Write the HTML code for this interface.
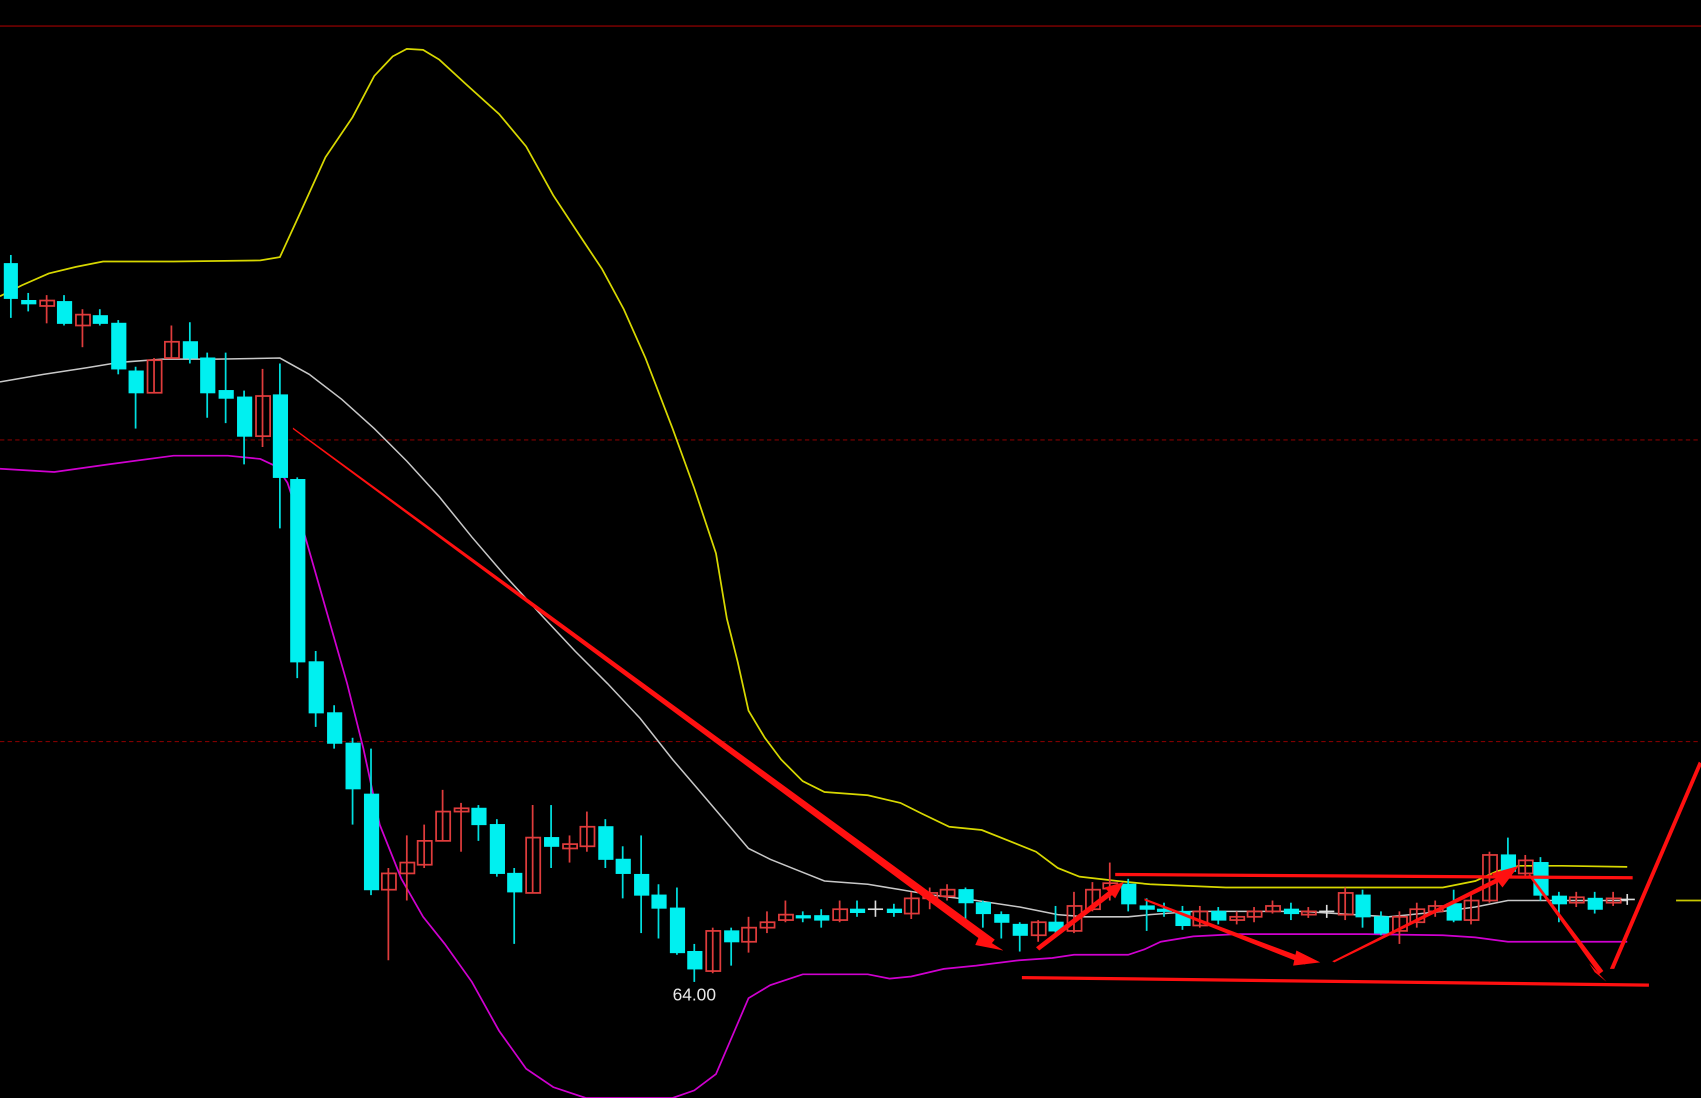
<!DOCTYPE html>
<html><head><meta charset="utf-8"><style>
html,body{margin:0;padding:0;background:#000;overflow:hidden}
svg{display:block}
.u{fill:none;stroke:#e03c3c;stroke-width:1.6}
.d{fill:#00f0f0;stroke:#00f0f0;stroke-width:1}
.wu{stroke:#e03c3c;stroke-width:1.6}
.wd{stroke:#00e0e0;stroke-width:1.6}
</style></head><body>
<svg width="1701" height="1098" viewBox="0 0 1568 1012" preserveAspectRatio="none" xmlns="http://www.w3.org/2000/svg">
<rect width="1568" height="1012" fill="#000"/>
<line x1="0" y1="24" x2="1568" y2="24" stroke="#700000" stroke-width="1.5"/>
<line x1="0" y1="405.5" x2="1568" y2="405.5" stroke="#800000" stroke-width="1" stroke-dasharray="4,3"/>
<line x1="0" y1="683.5" x2="1568" y2="683.5" stroke="#800000" stroke-width="1" stroke-dasharray="4,3"/>

<polyline fill="none" stroke="#d8d800" stroke-width="1.6" points="0,273 20,263 45,252 70,246 95,241 160,241 240,240 258,237 275,200 300,145 325,108 345,70 362,52 375,45 390,46 405,55 430,78 460,105 485,135 510,180 535,218 555,248 575,285 595,330 620,395 640,450 660,510 670,570 680,610 690,655 705,680 720,700 740,720 760,730 800,733 830,740 850,750 875,762 905,765 930,775 955,785 975,800 995,808 1030,812 1060,815 1130,818 1230,818 1330,818 1360,812 1380,803 1400,798 1440,798 1500,799"/>
<polyline fill="none" stroke="#c8c8c8" stroke-width="1.4" points="0,352 40,345 80,339 110,334 150,331 200,331 258,330 285,345 315,368 345,395 375,425 405,458 435,495 465,530 500,568 530,600 560,630 590,662 620,700 650,735 690,782 710,792 735,802 760,812 800,815 830,820 860,825 900,830 940,836 975,843 1000,845 1040,845 1060,843 1100,840 1200,840 1280,845 1330,840 1360,836 1390,830 1420,830 1500,830"/>
<polyline fill="none" stroke="#d000d0" stroke-width="1.6" points="0,432 50,435 100,428 160,420 210,420 240,423 255,430 265,445 280,490 300,560 320,630 335,690 350,760 370,810 390,845 410,870 435,905 460,950 485,985 510,1002 540,1012 620,1012 640,1005 660,990 675,955 690,920 710,908 740,898 800,898 820,902 840,900 870,893 900,890 940,885 970,883 990,880 1040,880 1055,875 1070,868 1100,863 1140,861 1200,861 1260,861 1330,862 1360,864 1390,868 1440,868 1500,868"/>

<g>
<line class="wd" x1="10" y1="235" x2="10" y2="293"/><rect class="d" x="4" y="243" width="12" height="32"/>
<line class="wd" x1="26" y1="270" x2="26" y2="287"/><rect class="d" x="20" y="277" width="13" height="3"/>
<line class="wu" x1="43" y1="272" x2="43" y2="298"/><rect class="u" x="37" y="277" width="13" height="5"/>
<line class="wd" x1="59" y1="272" x2="59" y2="300"/><rect class="d" x="53" y="278" width="13" height="20"/>
<line class="wu" x1="76" y1="285" x2="76" y2="320"/><rect class="u" x="70" y="290" width="13" height="10"/>
<line class="wd" x1="92" y1="285" x2="92" y2="300"/><rect class="d" x="86" y="291" width="13" height="7"/>
<line class="wd" x1="109" y1="295" x2="109" y2="345"/><rect class="d" x="103" y="298" width="13" height="42"/>
<line class="wd" x1="125" y1="338" x2="125" y2="395"/><rect class="d" x="119" y="342" width="13" height="20"/>
<line class="wu" x1="142" y1="330" x2="142" y2="362"/><rect class="u" x="136" y="332" width="13" height="30"/>
<line class="wu" x1="158" y1="300" x2="158" y2="330"/><rect class="u" x="152" y="315" width="13" height="15"/>
<line class="wd" x1="175" y1="297" x2="175" y2="335"/><rect class="d" x="169" y="315" width="13" height="15"/>
<line class="wd" x1="191" y1="325" x2="191" y2="385"/><rect class="d" x="185" y="330" width="13" height="32"/>
<line class="wd" x1="208" y1="325" x2="208" y2="390"/><rect class="d" x="202" y="360" width="13" height="7"/>
<line class="wd" x1="225" y1="360" x2="225" y2="428"/><rect class="d" x="219" y="366" width="13" height="36"/>
<line class="wu" x1="242" y1="340" x2="242" y2="412"/><rect class="u" x="236" y="365" width="13" height="37"/>
<line class="wd" x1="258" y1="335" x2="258" y2="487"/><rect class="d" x="252" y="364" width="13" height="76"/>
<line class="wd" x1="274" y1="440" x2="274" y2="625"/><rect class="d" x="268" y="442" width="13" height="168"/>
<line class="wd" x1="291" y1="600" x2="291" y2="670"/><rect class="d" x="285" y="610" width="13" height="47"/>
<line class="wd" x1="308" y1="650" x2="308" y2="690"/><rect class="d" x="302" y="657" width="13" height="28"/>
<line class="wd" x1="325" y1="680" x2="325" y2="760"/><rect class="d" x="319" y="685" width="13" height="42"/>
<line class="wd" x1="342" y1="690" x2="342" y2="825"/><rect class="d" x="336" y="732" width="13" height="88"/>
<line class="wu" x1="358" y1="800" x2="358" y2="885"/><rect class="u" x="352" y="805" width="13" height="15"/>
<line class="wu" x1="375" y1="770" x2="375" y2="830"/><rect class="u" x="369" y="795" width="13" height="10"/>
<line class="wu" x1="391" y1="760" x2="391" y2="800"/><rect class="u" x="385" y="775" width="13" height="22"/>
<line class="wu" x1="408" y1="728" x2="408" y2="775"/><rect class="u" x="402" y="748" width="13" height="27"/>
<line class="wu" x1="425" y1="740" x2="425" y2="785"/><rect class="u" x="419" y="745" width="13" height="3"/>
<line class="wd" x1="441" y1="742" x2="441" y2="775"/><rect class="d" x="435" y="745" width="13" height="15"/>
<line class="wd" x1="458" y1="755" x2="458" y2="808"/><rect class="d" x="452" y="760" width="13" height="45"/>
<line class="wd" x1="474" y1="800" x2="474" y2="870"/><rect class="d" x="468" y="805" width="13" height="17"/>
<line class="wu" x1="491" y1="742" x2="491" y2="823"/><rect class="u" x="485" y="772" width="13" height="51"/>
<line class="wd" x1="508" y1="742" x2="508" y2="800"/><rect class="d" x="502" y="772" width="13" height="8"/>
<line class="wu" x1="525" y1="770" x2="525" y2="795"/><rect class="u" x="519" y="778" width="13" height="4"/>
<line class="wu" x1="541" y1="748" x2="541" y2="785"/><rect class="u" x="535" y="762" width="13" height="18"/>
<line class="wd" x1="558" y1="755" x2="558" y2="800"/><rect class="d" x="552" y="762" width="13" height="30"/>
<line class="wd" x1="574" y1="780" x2="574" y2="828"/><rect class="d" x="568" y="792" width="13" height="13"/>
<line class="wd" x1="591" y1="770" x2="591" y2="860"/><rect class="d" x="585" y="806" width="13" height="19"/>
<line class="wd" x1="607" y1="815" x2="607" y2="865"/><rect class="d" x="601" y="825" width="13" height="12"/>
<line class="wd" x1="624" y1="818" x2="624" y2="880"/><rect class="d" x="618" y="837" width="13" height="41"/>
<line class="wd" x1="640" y1="870" x2="640" y2="905"/><rect class="d" x="634" y="877" width="13" height="16"/>
<line class="wu" x1="657" y1="855" x2="657" y2="897"/><rect class="u" x="651" y="858" width="13" height="37"/>
<line class="wd" x1="674" y1="855" x2="674" y2="890"/><rect class="d" x="668" y="858" width="13" height="10"/>
<line class="wu" x1="690" y1="845" x2="690" y2="878"/><rect class="u" x="684" y="855" width="13" height="13"/>
<line class="wu" x1="707" y1="840" x2="707" y2="860"/><rect class="u" x="701" y="850" width="13" height="5"/>
<line class="wu" x1="724" y1="830" x2="724" y2="850"/><rect class="u" x="718" y="843" width="13" height="5"/>
<line class="wd" x1="740" y1="840" x2="740" y2="850"/><rect class="d" x="734" y="844" width="13" height="2"/>
<line class="wd" x1="757" y1="838" x2="757" y2="855"/><rect class="d" x="751" y="844" width="13" height="4"/>
<line class="wu" x1="774" y1="830" x2="774" y2="850"/><rect class="u" x="768" y="838" width="13" height="10"/>
<line class="wd" x1="790" y1="830" x2="790" y2="845"/><rect class="d" x="784" y="838" width="13" height="3"/>
<line stroke="#ddd" stroke-width="1.5" x1="807" y1="830" x2="807" y2="845"/><line stroke="#ddd" stroke-width="1.5" x1="800" y1="838" x2="814" y2="838"/>
<line class="wd" x1="824" y1="833" x2="824" y2="845"/><rect class="d" x="818" y="838" width="13" height="3"/>
<line class="wu" x1="840" y1="822" x2="840" y2="847"/><rect class="u" x="834" y="828" width="13" height="14"/>
<line class="wu" x1="857" y1="818" x2="857" y2="838"/><rect class="u" x="851" y="823" width="13" height="5"/>
<line class="wu" x1="873" y1="815" x2="873" y2="830"/><rect class="u" x="867" y="820" width="13" height="6"/>
<line class="wd" x1="890" y1="818" x2="890" y2="850"/><rect class="d" x="884" y="820" width="13" height="12"/>
<line class="wd" x1="906" y1="830" x2="906" y2="855"/><rect class="d" x="900" y="832" width="13" height="10"/>
<line class="wd" x1="923" y1="840" x2="923" y2="865"/><rect class="d" x="917" y="843" width="13" height="7"/>
<line class="wd" x1="940" y1="850" x2="940" y2="877"/><rect class="d" x="934" y="852" width="13" height="10"/>
<line class="wu" x1="957" y1="848" x2="957" y2="868"/><rect class="u" x="951" y="850" width="13" height="12"/>
<line class="wd" x1="973" y1="835" x2="973" y2="862"/><rect class="d" x="967" y="850" width="13" height="8"/>
<line class="wu" x1="990" y1="822" x2="990" y2="860"/><rect class="u" x="984" y="835" width="13" height="23"/>
<line class="wu" x1="1007" y1="813" x2="1007" y2="840"/><rect class="u" x="1001" y="820" width="13" height="18"/>
<line class="wu" x1="1023" y1="795" x2="1023" y2="830"/><rect class="u" x="1017" y="814" width="13" height="5"/>
<line class="wd" x1="1040" y1="810" x2="1040" y2="840"/><rect class="d" x="1034" y="815" width="13" height="18"/>
<line class="wd" x1="1057" y1="828" x2="1057" y2="858"/><rect class="d" x="1051" y="835" width="13" height="3"/>
<line class="wd" x1="1073" y1="832" x2="1073" y2="845"/><rect class="d" x="1067" y="838" width="13" height="2"/>
<line class="wd" x1="1090" y1="835" x2="1090" y2="857"/><rect class="d" x="1084" y="840" width="13" height="13"/>
<line class="wu" x1="1106" y1="835" x2="1106" y2="855"/><rect class="u" x="1100" y="840" width="13" height="13"/>
<line class="wd" x1="1123" y1="836" x2="1123" y2="852"/><rect class="d" x="1117" y="840" width="13" height="8"/>
<line class="wu" x1="1140" y1="840" x2="1140" y2="852"/><rect class="u" x="1134" y="845" width="13" height="3"/>
<line class="wu" x1="1156" y1="836" x2="1156" y2="850"/><rect class="u" x="1150" y="840" width="13" height="5"/>
<line class="wu" x1="1173" y1="830" x2="1173" y2="842"/><rect class="u" x="1167" y="835" width="13" height="5"/>
<line class="wd" x1="1190" y1="832" x2="1190" y2="848"/><rect class="d" x="1184" y="838" width="13" height="4"/>
<line class="wu" x1="1206" y1="836" x2="1206" y2="846"/><rect class="u" x="1200" y="840" width="13" height="3"/>
<line stroke="#ddd" stroke-width="1.5" x1="1223" y1="834" x2="1223" y2="846"/><line stroke="#ddd" stroke-width="1.5" x1="1216" y1="840" x2="1230" y2="840"/>
<line class="wu" x1="1240" y1="818" x2="1240" y2="848"/><rect class="u" x="1234" y="823" width="13" height="20"/>
<line class="wd" x1="1256" y1="820" x2="1256" y2="855"/><rect class="d" x="1250" y="825" width="13" height="20"/>
<line class="wd" x1="1273" y1="840" x2="1273" y2="862"/><rect class="d" x="1267" y="845" width="13" height="15"/>
<line class="wu" x1="1290" y1="840" x2="1290" y2="870"/><rect class="u" x="1284" y="845" width="13" height="13"/>
<line class="wu" x1="1306" y1="832" x2="1306" y2="855"/><rect class="u" x="1300" y="838" width="13" height="12"/>
<line class="wu" x1="1323" y1="830" x2="1323" y2="845"/><rect class="u" x="1317" y="835" width="13" height="5"/>
<line class="wd" x1="1340" y1="820" x2="1340" y2="850"/><rect class="d" x="1334" y="833" width="13" height="15"/>
<line class="wu" x1="1356" y1="822" x2="1356" y2="852"/><rect class="u" x="1350" y="830" width="13" height="18"/>
<line class="wu" x1="1373" y1="785" x2="1373" y2="832"/><rect class="u" x="1367" y="788" width="13" height="42"/>
<line class="wd" x1="1390" y1="772" x2="1390" y2="805"/><rect class="d" x="1384" y="788" width="13" height="15"/>
<line class="wu" x1="1406" y1="788" x2="1406" y2="808"/><rect class="u" x="1400" y="793" width="13" height="12"/>
<line class="wd" x1="1420" y1="790" x2="1420" y2="830"/><rect class="d" x="1414" y="795" width="13" height="30"/>
<line class="wd" x1="1437" y1="822" x2="1437" y2="850"/><rect class="d" x="1431" y="826" width="13" height="7"/>
<line class="wu" x1="1453" y1="822" x2="1453" y2="836"/><rect class="u" x="1447" y="827" width="13" height="5"/>
<line class="wd" x1="1470" y1="822" x2="1470" y2="842"/><rect class="d" x="1464" y="828" width="13" height="10"/>
<line class="wu" x1="1487" y1="822" x2="1487" y2="835"/><rect class="u" x="1481" y="828" width="13" height="4"/>
<line stroke="#ddd" stroke-width="1.5" x1="1500" y1="824" x2="1500" y2="834"/><line stroke="#ddd" stroke-width="1.5" x1="1494" y1="829" x2="1507" y2="829"/>
</g>
<line x1="1545" y1="830" x2="1568" y2="830" stroke="#c8c800" stroke-width="1.6"/>

<g fill="#ff1010" stroke="none">
<polygon points="270,394 917,866 912,872 270,395.5"/>
<polygon points="903,862 925,876 899,871"/>
<polygon points="955,873 1030,815 1033,819 958,876"/>
<polygon points="1018,818 1036,813 1028,828"/>
<polygon points="1055,828 1205,884 1203,889 1055,830"/>
<polygon points="1195,876 1217,887 1192,890"/>
<polygon points="1228,886 1392,803 1394,807 1230,887"/>
<polygon points="1375,805 1400,798 1385,818"/>
<polygon points="1410,805 1478,895 1474,898 1409,807"/>
<polygon points="1465,888 1481,905 1470,896"/>
<polygon points="1484,893 1566,702 1569,704 1488,893"/>
</g>
<line x1="1028" y1="806" x2="1505" y2="809" stroke="#ff1010" stroke-width="3"/>
<line x1="942" y1="901" x2="1520" y2="908" stroke="#ff1010" stroke-width="3"/>

<text x="620" y="922" fill="#e8e8e8" font-family="Liberation Sans, sans-serif" font-size="16">64.00</text>
</svg>
</body></html>
